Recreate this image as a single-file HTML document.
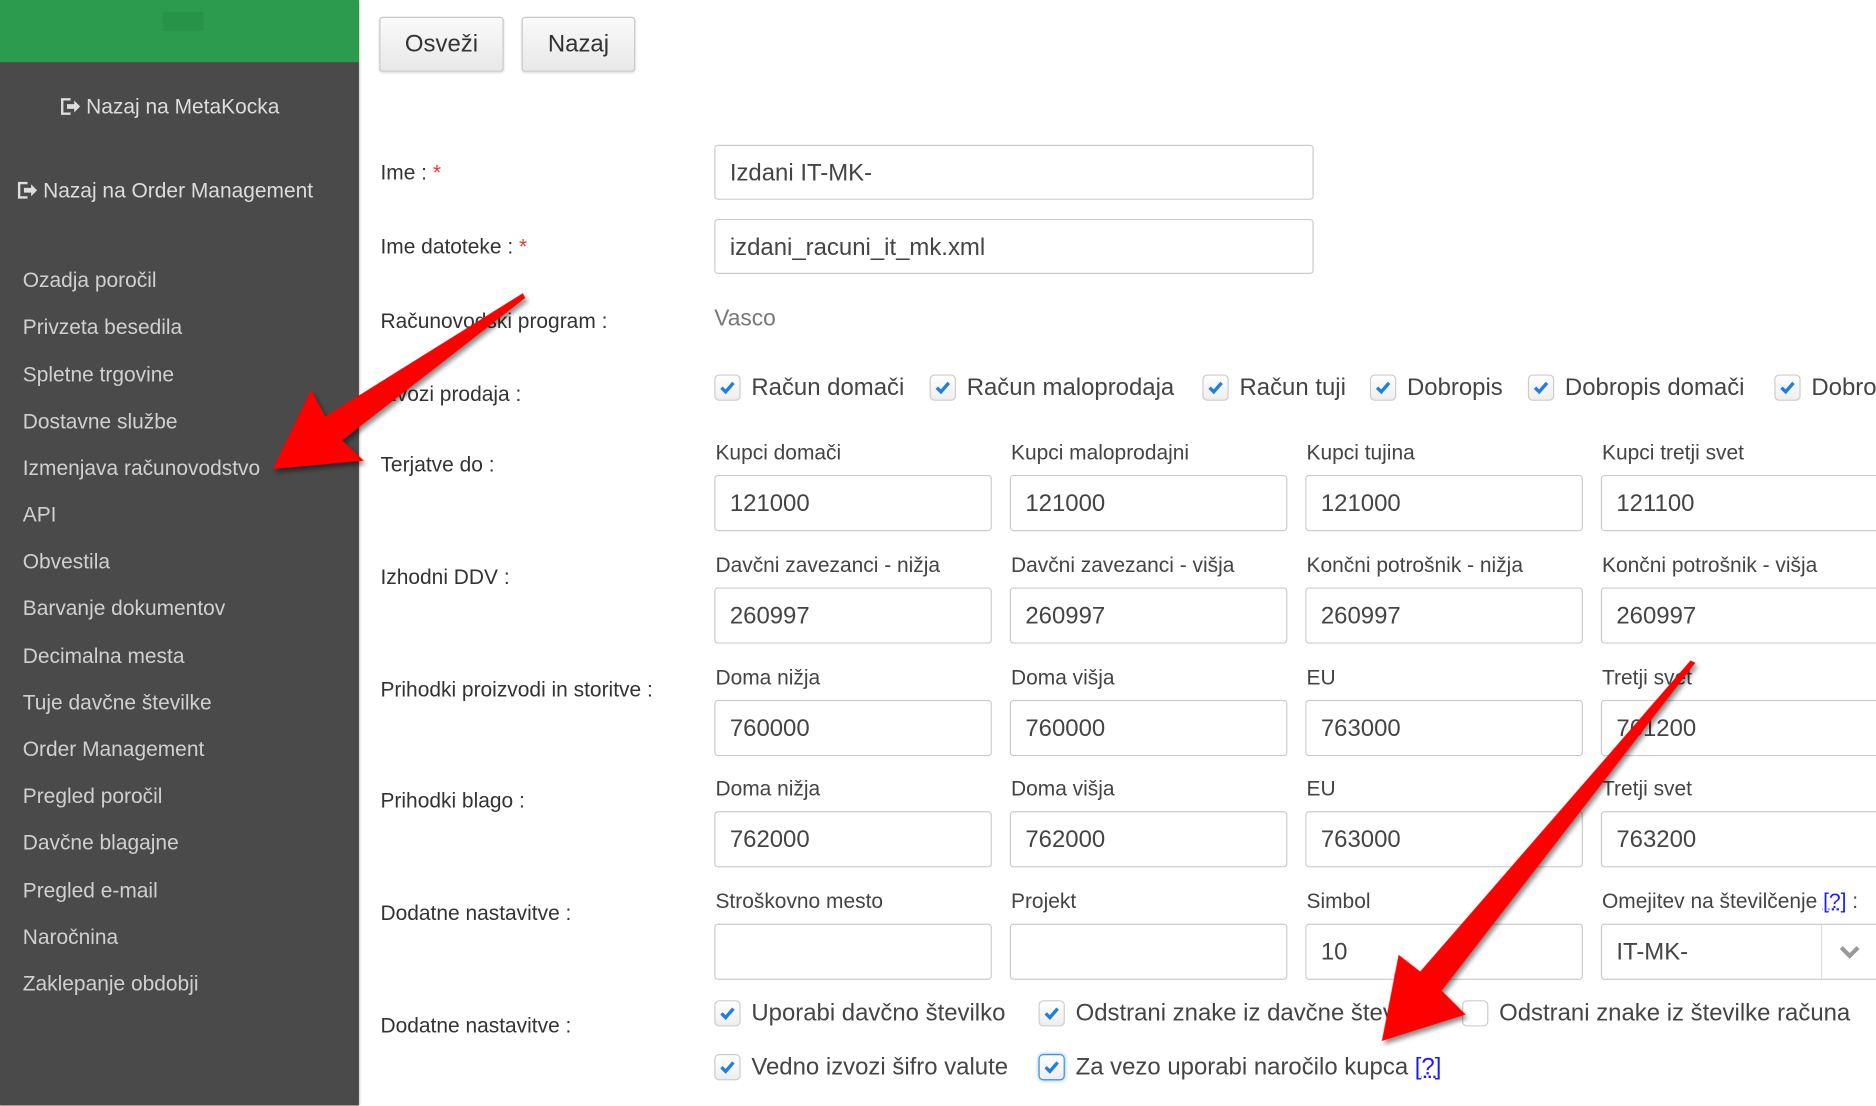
<!DOCTYPE html>
<html><head><meta charset="utf-8"><style>
html,body{margin:0;padding:0;width:1876px;height:1105px;overflow:hidden;background:#fff}
#w{position:absolute;left:0;top:0;width:1568px;height:924px;transform:scale(1.19643);transform-origin:0 0;font-family:"Liberation Sans",sans-serif;color:#444}
.a{position:absolute;white-space:nowrap}
#sb{position:absolute;left:0;top:0;width:300px;height:924px;background:#4a4a4a;box-shadow:1px 0 2px #bbb}
#gh{position:absolute;left:0;top:0;width:300px;height:52px;background:#2c9b4e}
.m{position:absolute;left:19px;font-size:17.5px;color:#d0d0d0;white-space:nowrap}
.btn{position:absolute;top:14px;height:44px;border:1px solid #c8c8c8;border-radius:3px;background:linear-gradient(#fafafa,#e8e8e8);font-size:20px;color:#333;line-height:44px;text-align:center;box-shadow:0 1px 2px rgba(0,0,0,.15)}
.lb{position:absolute;left:318px;font-size:17.5px;color:#333;white-space:nowrap}
.in{position:absolute;height:44px;border:1px solid #ccc;border-radius:3px;background:#fff;font-size:20px;color:#444;line-height:44px;padding-left:12px;box-sizing:border-box;white-space:nowrap}
.cl{position:absolute;font-size:17.5px;color:#444;white-space:nowrap}
.cb{position:absolute;width:22px;height:22px;border:1px solid #ccc;border-radius:4px;background:linear-gradient(#fff,#eee);box-sizing:border-box}
.cb svg{position:absolute;left:3px;top:4px}
.ct{position:absolute;font-size:20px;color:#444;white-space:nowrap}
.q{color:#1a1aff;text-decoration:underline dotted}
.ic{display:inline-block;vertical-align:-2px;margin-right:4px}
</style></head><body><div id="w">
<div id="sb"></div><div id="gh"><div style="position:absolute;left:136px;top:10px;width:34px;height:16px;background:#279348"></div></div>
<div class="a" style="left:50px;top:79px;font-size:17.5px;color:#ddd"><svg class="ic" width="18" height="16" viewBox="0 0 18 16"><path d="M9 2H2v12h7" stroke="#ddd" stroke-width="2" fill="none"/><path d="M6 6h6V3l5 5-5 5v-3H6z" fill="#ddd"/></svg>Nazaj na MetaKocka</div>
<div class="a" style="left:14px;top:149px;font-size:17.5px;color:#ddd"><svg class="ic" width="18" height="16" viewBox="0 0 18 16"><path d="M9 2H2v12h7" stroke="#ddd" stroke-width="2" fill="none"/><path d="M6 6h6V3l5 5-5 5v-3H6z" fill="#ddd"/></svg>Nazaj na Order Management</div>
<div class="m" style="top:224px">Ozadja poročil</div>
<div class="m" style="top:263px">Privzeta besedila</div>
<div class="m" style="top:303px">Spletne trgovine</div>
<div class="m" style="top:342px">Dostavne službe</div>
<div class="m" style="top:381px">Izmenjava računovodstvo</div>
<div class="m" style="top:420px">API</div>
<div class="m" style="top:459px">Obvestila</div>
<div class="m" style="top:498px">Barvanje dokumentov</div>
<div class="m" style="top:538px">Decimalna mesta</div>
<div class="m" style="top:577px">Tuje davčne številke</div>
<div class="m" style="top:616px">Order Management</div>
<div class="m" style="top:655px">Pregled poročil</div>
<div class="m" style="top:694px">Davčne blagajne</div>
<div class="m" style="top:734px">Pregled e-mail</div>
<div class="m" style="top:773px">Naročnina</div>
<div class="m" style="top:812px">Zaklepanje obdobji</div>

<div class="btn" style="left:317px;width:102px">Osveži</div>
<div class="btn" style="left:436px;width:93px">Nazaj</div>

<div class="lb" style="top:134px">Ime : <span style="color:#e33">*</span></div>
<div class="lb" style="top:196px">Ime datoteke : <span style="color:#e33">*</span></div>
<div class="lb" style="top:258px">Računovodski program :</div>
<div class="lb" style="top:319px">Izvozi prodaja :</div>
<div class="lb" style="top:378px">Terjatve do :</div>
<div class="lb" style="top:472px">Izhodni DDV :</div>
<div class="lb" style="top:566px">Prihodki proizvodi in storitve :</div>
<div class="lb" style="top:659px">Prihodki blago :</div>
<div class="lb" style="top:753px">Dodatne nastavitve :</div>
<div class="lb" style="top:847px">Dodatne nastavitve :</div>

<div class="in" style="left:597px;top:121px;width:501px;height:46px;line-height:46px">Izdani IT-MK-</div>
<div class="in" style="left:597px;top:183px;width:501px;height:46px;line-height:46px">izdani_racuni_it_mk.xml</div>
<div class="a" style="left:597px;top:256px;font-size:19px;color:#777">Vasco</div>

<!-- checkbox row -->
<div class="cb" style="left:597px;top:313px"><svg width="14" height="12" viewBox="0 0 14 12"><path d="M2 6l3.5 3.5L12 2" stroke="#1e7fe0" stroke-width="2.8" fill="none"/></svg></div><div class="ct" style="left:628px;top:313px">Račun domači</div>
<div class="cb" style="left:777px;top:313px"><svg width="14" height="12" viewBox="0 0 14 12"><path d="M2 6l3.5 3.5L12 2" stroke="#1e7fe0" stroke-width="2.8" fill="none"/></svg></div><div class="ct" style="left:808px;top:313px">Račun maloprodaja</div>
<div class="cb" style="left:1005px;top:313px"><svg width="14" height="12" viewBox="0 0 14 12"><path d="M2 6l3.5 3.5L12 2" stroke="#1e7fe0" stroke-width="2.8" fill="none"/></svg></div><div class="ct" style="left:1036px;top:313px">Račun tuji</div>
<div class="cb" style="left:1145px;top:313px"><svg width="14" height="12" viewBox="0 0 14 12"><path d="M2 6l3.5 3.5L12 2" stroke="#1e7fe0" stroke-width="2.8" fill="none"/></svg></div><div class="ct" style="left:1176px;top:313px">Dobropis</div>
<div class="cb" style="left:1277px;top:313px"><svg width="14" height="12" viewBox="0 0 14 12"><path d="M2 6l3.5 3.5L12 2" stroke="#1e7fe0" stroke-width="2.8" fill="none"/></svg></div><div class="ct" style="left:1308px;top:313px">Dobropis domači</div>
<div class="cb" style="left:1483px;top:313px"><svg width="14" height="12" viewBox="0 0 14 12"><path d="M2 6l3.5 3.5L12 2" stroke="#1e7fe0" stroke-width="2.8" fill="none"/></svg></div><div class="ct" style="left:1514px;top:313px">Dobropis tuji</div>

<!-- grid -->
<div class="cl" style="left:598px;top:368px">Kupci domači</div><div class="cl" style="left:845px;top:368px">Kupci maloprodajni</div><div class="cl" style="left:1092px;top:368px">Kupci tujina</div><div class="cl" style="left:1339px;top:368px">Kupci tretji svet</div>
<div class="in" style="left:597px;top:397px;width:232px;height:47px;line-height:47px">121000</div><div class="in" style="left:844px;top:397px;width:232px;height:47px;line-height:47px">121000</div><div class="in" style="left:1091px;top:397px;width:232px;height:47px;line-height:47px">121000</div><div class="in" style="left:1338px;top:397px;width:240px;height:47px;line-height:47px">121100</div>

<div class="cl" style="left:598px;top:462px">Davčni zavezanci - nižja</div><div class="cl" style="left:845px;top:462px">Davčni zavezanci - višja</div><div class="cl" style="left:1092px;top:462px">Končni potrošnik - nižja</div><div class="cl" style="left:1339px;top:462px">Končni potrošnik - višja</div>
<div class="in" style="left:597px;top:491px;width:232px;height:47px;line-height:47px">260997</div><div class="in" style="left:844px;top:491px;width:232px;height:47px;line-height:47px">260997</div><div class="in" style="left:1091px;top:491px;width:232px;height:47px;line-height:47px">260997</div><div class="in" style="left:1338px;top:491px;width:240px;height:47px;line-height:47px">260997</div>

<div class="cl" style="left:598px;top:556px">Doma nižja</div><div class="cl" style="left:845px;top:556px">Doma višja</div><div class="cl" style="left:1092px;top:556px">EU</div><div class="cl" style="left:1339px;top:556px">Tretji svet</div>
<div class="in" style="left:597px;top:585px;width:232px;height:47px;line-height:47px">760000</div><div class="in" style="left:844px;top:585px;width:232px;height:47px;line-height:47px">760000</div><div class="in" style="left:1091px;top:585px;width:232px;height:47px;line-height:47px">763000</div><div class="in" style="left:1338px;top:585px;width:240px;height:47px;line-height:47px">761200</div>

<div class="cl" style="left:598px;top:649px">Doma nižja</div><div class="cl" style="left:845px;top:649px">Doma višja</div><div class="cl" style="left:1092px;top:649px">EU</div><div class="cl" style="left:1339px;top:649px">Tretji svet</div>
<div class="in" style="left:597px;top:678px;width:232px;height:47px;line-height:47px">762000</div><div class="in" style="left:844px;top:678px;width:232px;height:47px;line-height:47px">762000</div><div class="in" style="left:1091px;top:678px;width:232px;height:47px;line-height:47px">763000</div><div class="in" style="left:1338px;top:678px;width:240px;height:47px;line-height:47px">763200</div>

<div class="cl" style="left:598px;top:743px">Stroškovno mesto</div><div class="cl" style="left:845px;top:743px">Projekt</div><div class="cl" style="left:1092px;top:743px">Simbol</div><div class="cl" style="left:1339px;top:743px">Omejitev na številčenje <span class="q">[?]</span> :</div>
<div class="in" style="left:597px;top:772px;width:232px;height:47px"></div><div class="in" style="left:844px;top:772px;width:232px;height:47px"></div><div class="in" style="left:1091px;top:772px;width:232px;height:47px;line-height:47px">10</div>
<div class="in" style="left:1338px;top:772px;width:240px;height:47px;line-height:47px">IT-MK-<div style="position:absolute;left:183px;top:0;width:1px;height:45px;background:#ddd"></div><svg style="position:absolute;left:197px;top:16px" width="20" height="14" viewBox="0 0 20 14"><path d="M3 3l7 7 7-7" stroke="#999" stroke-width="3.5" fill="none"/></svg></div>

<!-- bottom checkboxes -->
<div class="cb" style="left:597px;top:836px"><svg width="14" height="12" viewBox="0 0 14 12"><path d="M2 6l3.5 3.5L12 2" stroke="#1e7fe0" stroke-width="2.8" fill="none"/></svg></div><div class="ct" style="left:628px;top:836px">Uporabi davčno številko</div>
<div class="cb" style="left:868px;top:836px"><svg width="14" height="12" viewBox="0 0 14 12"><path d="M2 6l3.5 3.5L12 2" stroke="#1e7fe0" stroke-width="2.8" fill="none"/></svg></div><div class="ct" style="left:899px;top:836px">Odstrani znake iz davčne številke</div>
<div class="cb" style="left:1222px;top:836px;background:#fff"></div><div class="ct" style="left:1253px;top:836px;background:#fff;padding-right:2px">Odstrani znake iz številke računa</div>
<div class="cb" style="left:597px;top:881px"><svg width="14" height="12" viewBox="0 0 14 12"><path d="M2 6l3.5 3.5L12 2" stroke="#1e7fe0" stroke-width="2.8" fill="none"/></svg></div><div class="ct" style="left:628px;top:881px">Vedno izvozi šifro valute</div>
<div class="cb" style="left:868px;top:881px;border-color:#3d8fe0;box-shadow:0 0 3px #7ab3ef"><svg width="14" height="12" viewBox="0 0 14 12"><path d="M2 6l3.5 3.5L12 2" stroke="#1e7fe0" stroke-width="2.8" fill="none"/></svg></div><div class="ct" style="left:899px;top:881px">Za vezo uporabi naročilo kupca <span class="q">[?]</span></div>

<svg style="position:absolute;left:0;top:0;filter:drop-shadow(2px 3px 2px rgba(0,0,0,.45))" width="1568" height="924">
<polygon fill="#f00" points="439,249 286,368 304,385 228,392 260,326 272,348 437,245"/>
<polygon fill="#f00" points="1417,554 1205,828 1225,848 1155,870 1169,798 1187,812 1413,552"/>
</svg>
</div></body></html>
